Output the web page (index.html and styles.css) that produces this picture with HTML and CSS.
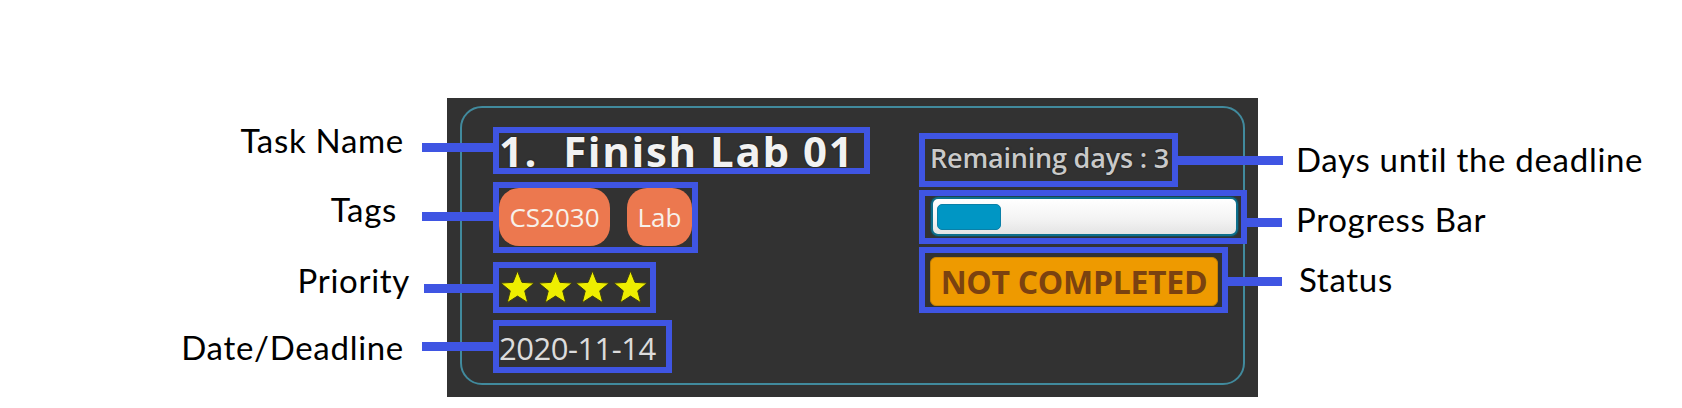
FILE: index.html
```html
<!DOCTYPE html>
<html lang="en">
<head>
<meta charset="utf-8">
<title>Task card annotated</title>
<link rel="stylesheet" href="styles.css">
</head>
<body>
<main class="figure">
  <div class="labels labels-left">
    <div class="label label-task">Task Name</div>
    <div class="label label-tags">Tags</div>
    <div class="label label-priority">Priority</div>
    <div class="label label-date">Date/Deadline</div>
  </div>

  <section class="card">
    <div class="frame">
      <div class="col col-main">
        <div class="anno anno-task"><h1 class="task-name">1.  Finish Lab 01</h1></div>
        <div class="anno anno-tags">
          <span class="tag tag-cs">CS2030</span>
          <span class="tag tag-lab">Lab</span>
        </div>
        <div class="anno anno-priority">
          <svg class="star" viewBox="-1 -1 37 35" width="37" height="35"><polygon points="17.5,0 21.97,11.35 34.14,12.09 24.73,19.85 27.79,31.66 17.5,25.1 7.21,31.66 10.27,19.85 0.86,12.09 13.03,11.35"/></svg>
          <svg class="star" viewBox="-1 -1 37 35" width="37" height="35"><polygon points="17.5,0 21.97,11.35 34.14,12.09 24.73,19.85 27.79,31.66 17.5,25.1 7.21,31.66 10.27,19.85 0.86,12.09 13.03,11.35"/></svg>
          <svg class="star" viewBox="-1 -1 37 35" width="37" height="35"><polygon points="17.5,0 21.97,11.35 34.14,12.09 24.73,19.85 27.79,31.66 17.5,25.1 7.21,31.66 10.27,19.85 0.86,12.09 13.03,11.35"/></svg>
          <svg class="star" viewBox="-1 -1 37 35" width="37" height="35"><polygon points="17.5,0 21.97,11.35 34.14,12.09 24.73,19.85 27.79,31.66 17.5,25.1 7.21,31.66 10.27,19.85 0.86,12.09 13.03,11.35"/></svg>
        </div>
        <div class="anno anno-date"><span class="date">2020-11-14</span></div>
      </div>

      <div class="col col-side">
        <div class="anno anno-days"><span class="days">Remaining days : 3</span></div>
        <div class="anno anno-progress">
          <div class="progress"><div class="progress-fill" style="width:64px"></div></div>
        </div>
        <div class="anno anno-status"><div class="status">NOT COMPLETED</div></div>
      </div>
    </div>
  </section>

  <div class="labels labels-right">
    <div class="label label-days">Days until the deadline</div>
    <div class="label label-progress">Progress Bar</div>
    <div class="label label-status">Status</div>
  </div>
</main>
</body>
</html>
```

FILE: styles.css
```css
* { box-sizing: border-box; }

html, body {
  margin: 0;
  padding: 0;
  background: #ffffff;
}

body {
  width: 1682px;
  height: 408px;
  overflow: hidden;
}

.figure {
  display: flex;
  align-items: flex-start;
  height: 408px;
}

/* ---------- annotation labels ---------- */
.labels {
  display: flex;
  flex-direction: column;
  font-family: Lato, "Open Sans", sans-serif;
  font-size: 33px;
  line-height: 40px;
  letter-spacing: 0.7px;
  color: #000000;
  white-space: nowrap;
}

.labels-left {
  width: 447px;
  flex: none;
  align-items: flex-end;
  padding-top: 120px;
  padding-right: 43px;
}

.label-tags { margin-top: 29px; margin-right: 7px; }
.label-priority { margin-top: 31px; margin-right: -6px; }
.label-date { margin-top: 27px; }

.labels-right {
  padding-top: 139px;
  padding-left: 38px;
}

.label-progress { margin-top: 20px; }
.label-status { margin-top: 20px; margin-left: 3px; }

/* ---------- card ---------- */
.card {
  flex: none;
  margin-top: 98px;
  width: 811px;
  height: 299px;
  background: #323232;
  padding: 8px 13px 12px 13px;
}

.frame {
  width: 785px;
  height: 279px;
  border: 2px solid #418a9d;
  border-radius: 22px;
  display: flex;
  align-items: flex-start;
  padding: 19px 0 0 31px;
}

.col {
  display: flex;
  flex-direction: column;
  align-items: flex-start;
}

.col-side {
  margin-left: 49px;
  margin-top: 6px;
}

/* ---------- annotation boxes ---------- */
.anno {
  position: relative;
  border: 6px solid #3f55e3;
  flex: none;
}

.anno::before {
  content: "";
  position: absolute;
  height: 9px;
  background: #3f55e3;
}

.anno-task { width: 377px; height: 47px; }
.anno-task::before { top: 10px; left: -77px; width: 71px; }

.anno-tags {
  width: 205px;
  height: 71px;
  margin-top: 8px;
  display: flex;
  gap: 17px;
}
.anno-tags::before { top: 24px; left: -77px; width: 71px; }

.anno-priority {
  width: 163px;
  height: 51px;
  margin-top: 9px;
  display: flex;
  gap: 0.6px;
  padding-top: 2px;
}
.anno-priority::before { top: 16px; left: -75px; width: 69px; }

.anno-date {
  width: 179px;
  height: 53px;
  margin-top: 7px;
  padding-top: 3px;
}
.anno-date::before { top: 16px; left: -77px; width: 71px; }

.anno-days {
  width: 259px;
  height: 54px;
  padding-left: 5px;
}
.anno-days::before { top: 17px; left: calc(100% + 6px); width: 105px; }

.anno-progress {
  width: 328px;
  height: 54px;
  margin-top: 3px;
  padding: 1px 0 0 6px;
}
.anno-progress::before { top: 22px; left: calc(100% + 6px); width: 35px; }

.anno-status {
  width: 309px;
  height: 66px;
  margin-top: 3px;
  padding: 4px 0 0 5px;
}
.anno-status::before { top: 24px; left: calc(100% + 6px); width: 54px; }

/* ---------- card content ---------- */
.task-name {
  margin: 0;
  font-family: "Open Sans", sans-serif;
  font-weight: 700;
  font-size: 42px;
  line-height: 35px;
  letter-spacing: 1.6px;
  color: #f2f2f2;
  white-space: pre;
  text-shadow: 0 0 2px rgba(0, 0, 0, 0.6);
}

.tag {
  display: flex;
  align-items: center;
  justify-content: center;
  height: 58px;
  border-radius: 20px;
  background: #ec784f;
  color: #f7f1ea;
  font-family: "Open Sans", sans-serif;
  font-weight: 500;
  font-size: 26px;
  line-height: 58px;
}

.tag-cs { width: 111px; }
.tag-lab { width: 65px; }

.star { display: block; flex: none; }
.star polygon {
  fill: #eeee00;
  stroke: #3d3d10;
  stroke-width: 1;
  stroke-linejoin: miter;
}

.date {
  display: block;
  font-family: "Open Sans", sans-serif;
  font-size: 31px;
  line-height: 39px;
  letter-spacing: -0.5px;
  color: #dcdcdc;
}

.days {
  display: block;
  font-family: "Open Sans", sans-serif;
  font-weight: 600;
  font-size: 27px;
  line-height: 37px;
  letter-spacing: -0.2px;
  color: #c9c9c9;
  white-space: nowrap;
  text-shadow: 0 0 2px rgba(0, 0, 0, 0.7);
}

.progress {
  width: 307px;
  height: 39px;
  border: 2px solid #0d6f8c;
  border-radius: 7px;
  background: linear-gradient(#ffffff, #f4f4f4 55%, #e4e4e4);
  box-shadow: 0 0 0 1px #1d4550;
  display: flex;
  align-items: center;
  padding-left: 4px;
}

.progress-fill {
  height: 26px;
  border-radius: 5px;
  background: #0096c4;
  border: 1px solid #0a80a8;
}

.status {
  width: 288px;
  height: 49px;
  border-radius: 6px;
  background: #ee9a00;
  border: 1px solid #c98300;
  display: flex;
  align-items: center;
  justify-content: center;
  font-family: "Open Sans", sans-serif;
  font-weight: 700;
  font-size: 32px;
  letter-spacing: -0.3px;
  color: #7b4210;
  white-space: nowrap;
}
```
